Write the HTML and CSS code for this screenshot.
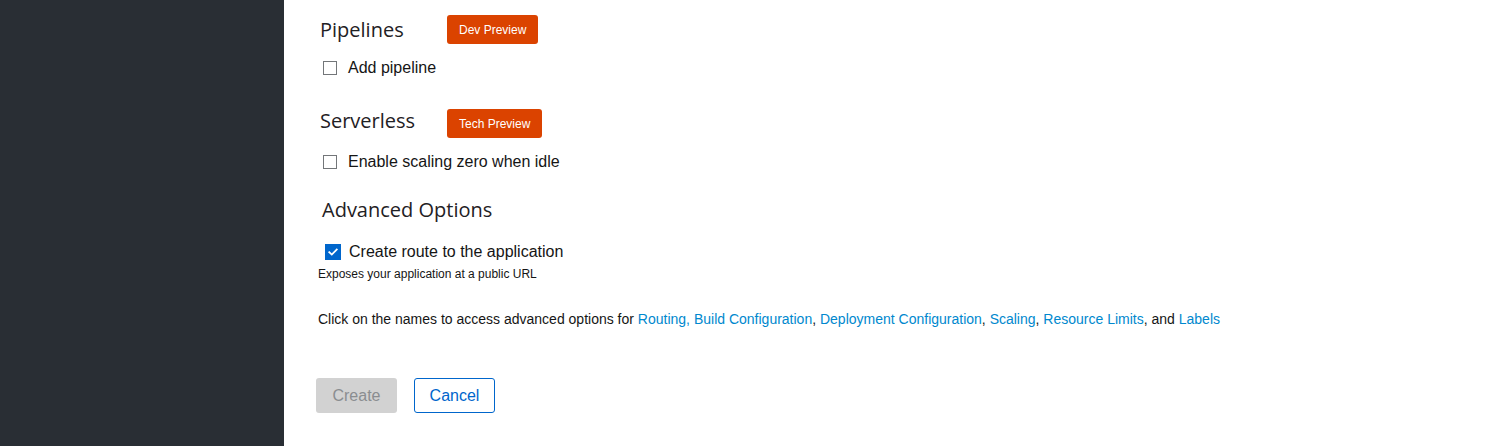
FILE: index.html
```html
<!DOCTYPE html>
<html>
<head>
<meta charset="utf-8">
<link rel="stylesheet" href="styles.css">
</head>
<body>
<div class="app">
  <aside class="sidebar"></aside>
  <main class="main">
    <section class="group">
      <div class="group-head">
        <h2 class="title">Pipelines</h2>
        <span class="badge">Dev Preview</span>
      </div>
      <label class="check"><span class="box"></span><span class="check-label">Add pipeline</span></label>
    </section>
    <section class="group group-2">
      <div class="group-head">
        <h2 class="title title-up">Serverless</h2>
        <span class="badge">Tech Preview</span>
      </div>
      <label class="check"><span class="box"></span><span class="check-label">Enable scaling zero when idle</span></label>
    </section>
    <section class="advanced">
      <h2 class="title adv-title">Advanced Options</h2>
      <label class="check check-on"><span class="box box-on"><svg viewBox="0 0 16 16" width="12" height="12"><path d="M3 8.2 L6.4 11.4 L13 4.6" fill="none" stroke="#fff" stroke-width="2.4" stroke-linecap="square"/></svg></span><span class="check-label">Create route to the application</span></label>
      <p class="helper">Exposes your application at a public URL</p>
    </section>
    <p class="links">Click on the names to access advanced options for <a>Routing,</a> <a>Build Configuration</a>, <a>Deployment Configuration</a>, <a>Scaling</a>, <a>Resource Limits</a>, and <a>Labels</a></p>
    <div class="actions">
      <button class="btn btn-primary" disabled>Create</button>
      <button class="btn btn-secondary">Cancel</button>
    </div>
  </main>
</div>
</body>
</html>
```

FILE: styles.css
```css
* { box-sizing: border-box; }
html, body { margin: 0; padding: 0; }
body {
  font-family: "Liberation Sans", Arial, sans-serif;
  color: #151515;
  background: #fff;
}
.app { display: flex; height: 446px; overflow: hidden; }
.sidebar { width: 284px; flex: none; background: #292e34; }
.main { flex: 1; padding: 15px 0 0 32px; }
.group { padding-left: 4px; }
.group-head { display: flex; align-items: center; gap: 0; height: 29px; }
.title {
  margin: 0;
  font-family: "Open Sans", sans-serif;
  font-weight: 400;
  font-size: 20px;
  width: 127px;
  color: #1f2124;
}
.title-up { margin-bottom: 6px; }
.badge {
  display: inline-flex; align-items: center; justify-content: center;
  height: 29px;
  padding: 0 12px;
  background: #db4300;
  color: #fff;
  border-radius: 3px;
  font-size: 12px;
}
.check { display: flex; align-items: center; margin-top: 15px; padding-left: 3px; height: 18px; }
.box {
  width: 14px; height: 14px; border: 1px solid #737679; background: #fff; flex: none;
  display: inline-flex; align-items: center; justify-content: center;
}
.box-on { background: #06c; border-color: #06c; width: 16px; height: 16px; }
.check-label { margin-left: 11px; font-size: 16px; }
.group-2 { margin-top: 32px; }
.advanced { margin-top: 25px; }
.adv-title { padding-left: 6px; width: auto; }
.check-on { margin-top: 20px; padding-left: 9px; }
.check-on .check-label { margin-left: 8px; }
.helper { margin: 6px 0 0 2px; font-size: 12px; }
.links { margin: 30px 0 0 2px; font-size: 14px; }
.links a { color: #0088ce; }
.actions { display: flex; gap: 17px; margin-top: 51px; }
.btn {
  width: 81px; height: 35px; border-radius: 3px; font-size: 16px; font-family: inherit;
  background: #fff; padding: 0;
}
.btn-primary { background: #d2d2d2; color: #8a8d90; border: none; }
.btn-secondary { border: 1px solid #06c; color: #06c; }
```
